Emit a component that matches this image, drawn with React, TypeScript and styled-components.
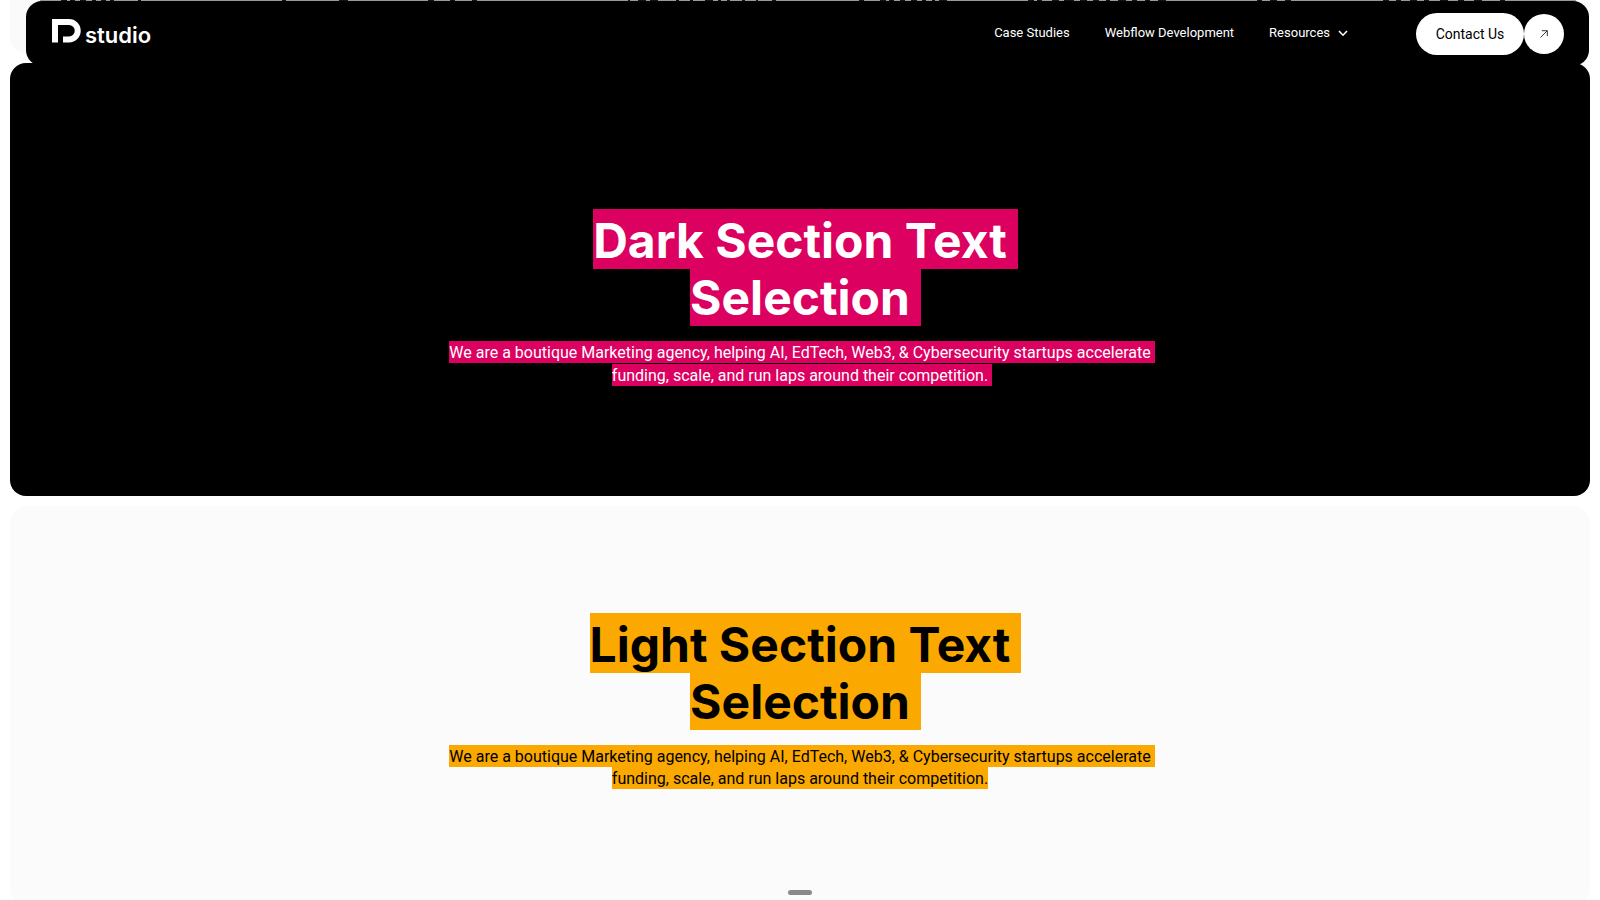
import React from "react";
import styled, { createGlobalStyle } from "styled-components";

const Global = createGlobalStyle`
  * { box-sizing: border-box; }
  body {
    margin: 0;
    background: #fff;
    font-family: Roboto, "Liberation Sans", sans-serif;
  }
`;

const Page = styled.div`
  height: 100vh;
  overflow: hidden;
  padding: 0 10px;
`;

const PreviousSection = styled.div`
  height: 53px;
  margin-bottom: 10px;
  background: #fafafa;
  border-radius: 0 0 16px 16px;
`;

const Section = styled.section<{ $tone: "dark" | "light" }>`
  display: flex;
  flex-direction: column;
  align-items: center;
  gap: 15px;
  margin-bottom: 10px;
  border-radius: 16px;
  background: ${(p) => (p.$tone === "dark" ? "#000" : "#fbfbfb")};
  color: ${(p) => (p.$tone === "dark" ? "#fff" : "#000")};
  padding: ${(p) => (p.$tone === "dark" ? "146px 24px 110px" : "107px 24px 115px")};
  --mark: ${(p) => (p.$tone === "dark" ? "#dc0060" : "#fba900")};
`;

const Title = styled.h1`
  display: flex;
  flex-direction: column;
  align-items: center;
  margin: 0;
  font-family: Inter, "Liberation Sans", sans-serif;
  font-size: 48px;
  font-weight: 700;
  line-height: 57px;
  white-space: nowrap;
`;

const TitleMark = styled.mark`
  background: var(--mark);
  color: inherit;
  padding-right: 11px;
  margin-right: -11px;
  &:first-child { padding-top: 3px; }
`;

const Lead = styled.p<{ $seam?: boolean }>`
  display: flex;
  flex-direction: column;
  align-items: center;
  gap: ${(p) => (p.$seam ? "1px" : "0")};
  margin: 0;
  font-size: 16px;
  line-height: 20px;
  white-space: nowrap;
`;

const LeadMark = styled.mark<{ $tail?: boolean }>`
  background: var(--mark);
  color: inherit;
  padding-top: 2px;
  padding-right: ${(p) => (p.$tail ? "4px" : "0")};
  margin-right: ${(p) => (p.$tail ? "-4px" : "0")};
`;

const Header = styled.header`
  position: fixed;
  z-index: 1;
  top: 1px;
  left: 26px;
  right: 11px;
  height: 65px;
  display: flex;
  align-items: center;
  padding: 0 25px 0 26px;
  border-radius: 16px;
  background: #000;
  color: #fff;
`;

const Strip = styled.svg`
  position: fixed;
  top: 0;
  left: 0;
  width: 100%;
  height: 1px;
`;

const Logo = styled.a`
  display: flex;
  align-items: flex-start;
  gap: 4px;
  height: 30px;
  margin-right: auto;
  color: #fff;
  text-decoration: none;
  font-family: Inter, "Liberation Sans", sans-serif;
  font-size: 22px;
  font-weight: 600;
  line-height: 32px;
  svg { display: block; }
`;

const Nav = styled.nav`
  display: flex;
  align-items: center;
  gap: 35px;
  margin-right: 68px;
  margin-bottom: 1px;
`;

const NavLink = styled.a`
  color: #fff;
  text-decoration: none;
  font-size: 13px;
  line-height: 20px;
`;

const NavButton = styled.button`
  display: flex;
  align-items: center;
  gap: 8px;
  padding: 0;
  border: 0;
  background: none;
  color: #fff;
  font: inherit;
  font-size: 13px;
  line-height: 20px;
`;

const Contact = styled.button`
  width: 108px;
  height: 42px;
  padding: 0;
  border: 0;
  border-radius: 21px;
  background: #fff;
  color: #000;
  font: inherit;
  font-size: 14px;
`;

const Arrow = styled.button`
  display: grid;
  place-items: center;
  width: 40px;
  height: 40px;
  padding: 0;
  border: 0;
  border-radius: 50%;
  background: #fff;
`;

const Handle = styled.div`
  position: fixed;
  bottom: 5px;
  left: 50%;
  width: 24px;
  height: 5px;
  margin-left: -12px;
  border-radius: 3px;
  background: #8a8a8a;
`;

const specks: [number, number][] = [
  [61, 6], [70, 5], [80, 6], [92, 4], [101, 5], [110, 4], [138, 3], [282, 4], [339, 9],
  [428, 6], [450, 5], [472, 5], [628, 2], [638, 8], [650, 8], [676, 3], [690, 3],
  [705, 8], [718, 3], [727, 3], [742, 3], [756, 2], [772, 4], [859, 5], [880, 6],
  [889, 5], [900, 5], [911, 6], [922, 4], [932, 3], [939, 8], [1028, 6], [1037, 5],
  [1052, 7], [1064, 10], [1080, 7], [1093, 6], [1106, 4], [1118, 8], [1132, 5],
  [1145, 5], [1158, 8], [1257, 5], [1270, 7], [1285, 6], [1383, 6], [1396, 5],
  [1410, 7], [1424, 5], [1440, 8], [1458, 6], [1474, 8], [1500, 5],
];

const leadLines = [
  "We are a boutique Marketing agency, helping AI, EdTech, Web3, & Cybersecurity startups accelerate",
  "funding, scale, and run laps around their competition.",
];

function SelectionSection({ tone, first }: { tone: "dark" | "light"; first: string }) {
  const dark = tone === "dark";
  return (
    <Section $tone={tone}>
      <Title>
        <TitleMark>{first}</TitleMark>
        <TitleMark>Selection</TitleMark>
      </Title>
      <Lead $seam={dark}>
        <LeadMark $tail>{leadLines[0]}</LeadMark>
        <LeadMark $tail={dark}>{leadLines[1]}</LeadMark>
      </Lead>
    </Section>
  );
}

export default function App() {
  return (
    <Page>
      <Global />
      <PreviousSection />
      <Strip viewBox="0 0 1600 1" preserveAspectRatio="none" aria-hidden="true">
        <rect x="40" width="1536" height="1" fill="#999" />
        {specks.map(([x, w]) => (
          <rect key={x} x={x} width={w} height="1" fill="#111" />
        ))}
      </Strip>
      <Header>
        <Logo href="#">
          <svg width="29" height="24" viewBox="0 0 29 24" aria-hidden="true">
            <path
              d="M0 0H17A11.75 11.75 0 0 1 17 23.5H11V17.5H17A5.75 5.75 0 0 0 17 6H6V23.5H0Z"
              fill="#fff"
            />
          </svg>
          studio
        </Logo>
        <Nav>
          <NavLink href="#">Case Studies</NavLink>
          <NavLink href="#">Webflow Development</NavLink>
          <NavButton type="button">
            Resources
            <svg width="10" height="7" viewBox="0 0 10 7" fill="none" aria-hidden="true">
              <path d="M1 1L5 5.2L9 1" stroke="#fff" strokeWidth="1.6" />
            </svg>
          </NavButton>
        </Nav>
        <Contact type="button">Contact Us</Contact>
        <Arrow type="button" aria-label="Open contact page">
          <svg width="8" height="8" viewBox="0 0 8 8" fill="none" aria-hidden="true">
            <path d="M0.5 7.5L7.3 0.7M1.8 0.7H7.3V6.2" stroke="#222" strokeWidth="0.9" />
          </svg>
        </Arrow>
      </Header>
      <main>
        <SelectionSection tone="dark" first="Dark Section Text" />
        <SelectionSection tone="light" first="Light Section Text" />
      </main>
      <Handle />
    </Page>
  );
}
